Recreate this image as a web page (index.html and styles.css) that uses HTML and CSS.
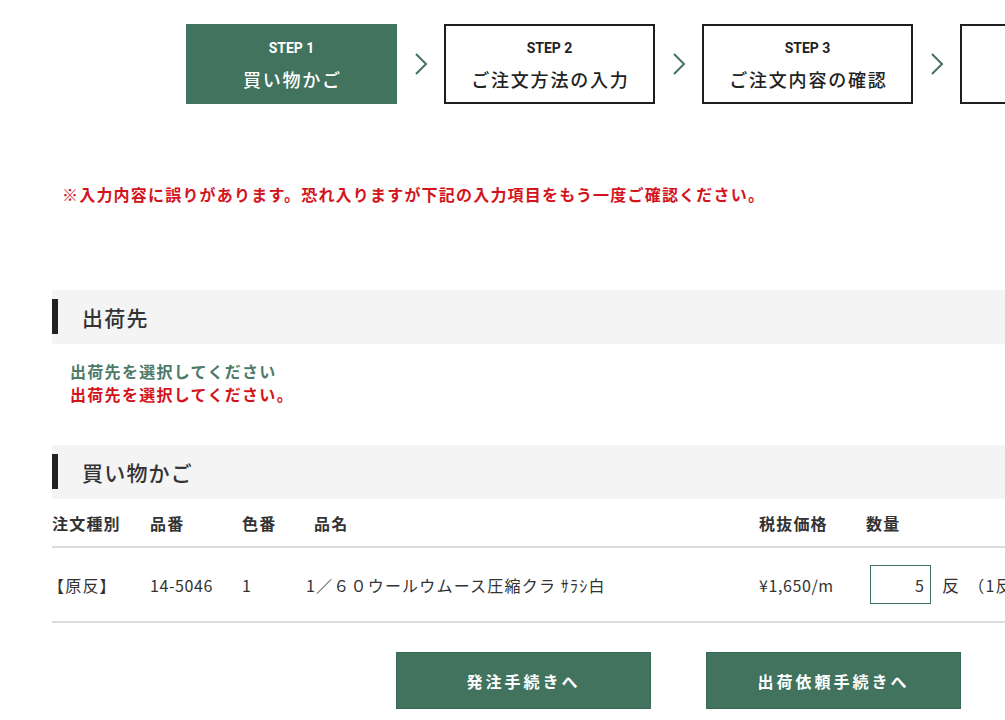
FILE: index.html
```html
<!DOCTYPE html>
<html lang="ja">
<head>
<meta charset="utf-8">
<title>買い物かご</title>
<link rel="stylesheet" href="styles.css">
</head>
<body>
<div class="page">
  <div class="container">
    <ol class="steps">
      <li class="step is-current"><span class="step-no">STEP 1</span><span class="step-name">買い物かご</span></li>
      <li class="arrow"><svg width="14" height="24" viewBox="0 0 14 24"><polyline points="2,2 12,12 2,22" fill="none" stroke="#41735f" stroke-width="2"/></svg></li>
      <li class="step"><span class="step-no">STEP 2</span><span class="step-name">ご注文方法の入力</span></li>
      <li class="arrow"><svg width="14" height="24" viewBox="0 0 14 24"><polyline points="2,2 12,12 2,22" fill="none" stroke="#41735f" stroke-width="2"/></svg></li>
      <li class="step"><span class="step-no">STEP 3</span><span class="step-name">ご注文内容の確認</span></li>
      <li class="arrow"><svg width="14" height="24" viewBox="0 0 14 24"><polyline points="2,2 12,12 2,22" fill="none" stroke="#41735f" stroke-width="2"/></svg></li>
      <li class="step"><span class="step-no">STEP 4</span><span class="step-name">完了</span></li>
    </ol>

    <p class="error-main">※入力内容に誤りがあります。恐れ入りますが下記の入力項目をもう一度ご確認ください。</p>

    <section class="section">
      <h2 class="section-title">出荷先</h2>
      <div class="ship-body">
        <p class="ship-note">出荷先を選択してください</p>
        <p class="ship-error">出荷先を選択してください。</p>
      </div>
    </section>

    <section class="section">
      <h2 class="section-title">買い物かご</h2>
      <div class="cart">
        <div class="cart-row cart-head">
          <div>注文種別</div>
          <div>品番</div>
          <div>色番</div>
          <div class="col-name">品名</div>
          <div>税抜価格</div>
          <div>数量</div>
        </div>
        <div class="cart-row cart-item">
          <div class="col-type">【原反】</div>
          <div class="num">14-5046</div>
          <div class="num">1</div>
          <div>1／６０ウールウムース圧縮クラ ｻﾗｼ白</div>
          <div class="num">¥1,650/m</div>
          <div class="qty"><input class="qty-input" type="text" value="5"><span class="unit">反</span><span class="unit-note">（1反＝約50m）</span></div>
        </div>
      </div>
    </section>

    <div class="actions">
      <button class="btn" type="button">発注手続きへ</button>
      <button class="btn" type="button">出荷依頼手続きへ</button>
    </div>
  </div>
</div>
</body>
</html>
```
FILE: styles.css
```css
html, body {
  margin: 0;
  padding: 0;
  background: #fff;
}
body {
  font-family: "Noto Sans CJK JP", "Noto Sans", sans-serif;
  color: #333;
}
.page {
  width: 1005px;
  height: 720px;
  overflow: hidden;
}
.container {
  width: 1250px;
  margin-left: 52px;
  padding-top: 24px;
}
.steps {
  list-style: none;
  margin: 0;
  padding: 0 0 0 134px;
  display: flex;
  align-items: center;
}
.step {
  box-sizing: border-box;
  width: 211px;
  height: 80px;
  border: 2px solid #1e1e1e;
  display: flex;
  flex-direction: column;
  align-items: center;
  justify-content: center;
  flex-shrink: 0;
}
.step.is-current {
  background: #41735f;
  border-color: #41735f;
  color: #fff;
}
.step-no {
  font-family: "Roboto", "Noto Sans", sans-serif;
  font-weight: 700;
  font-size: 14px;
  line-height: 18px;
  color: #222;
  margin-top: 2px;
}
.step-name {
  font-size: 18px;
  font-weight: 500;
  letter-spacing: 1.8px;
  line-height: 26px;
  margin-top: 9px;
  margin-right: -1.8px;
  color: #222;
}
.is-current .step-no,
.is-current .step-name {
  color: #fff;
}
.arrow {
  width: 47px;
  display: flex;
  justify-content: center;
  flex-shrink: 0;
}
.arrow svg {
  display: block;
}
.error-main {
  margin: 79px 0 0 10px;
  color: #d3141c;
  font-weight: 700;
  font-size: 16px;
  line-height: 22px;
  letter-spacing: 1.2px;
}
.section:first-of-type {
  margin-top: 85px;
}
.section-title {
  margin: 0;
  height: 54px;
  box-sizing: border-box;
  background: #f4f4f4;
  display: flex;
  align-items: center;
  padding-left: 30px;
  position: relative;
  font-size: 21px;
  font-weight: 500;
  letter-spacing: 1.2px;
  color: #333;
}
.section-title::before {
  content: "";
  position: absolute;
  left: 0;
  top: 9px;
  bottom: 10px;
  width: 6px;
  background: #222;
}
.ship-body {
  padding: 16px 0 0 18px;
  height: 101px;
  box-sizing: border-box;
}
.ship-body p {
  margin: 0;
  font-size: 16px;
  font-weight: 700;
  line-height: 23px;
  letter-spacing: 1.3px;
}
.ship-note {
  color: #4e7a6a;
}
.ship-error {
  color: #d3141c;
}
.cart-row {
  display: grid;
  grid-template-columns: 98px 92px 64px 453px 107px 1fr;
  align-items: center;
  font-size: 16px;
  letter-spacing: 1.2px;
}
.cart-head {
  height: 47px;
  font-weight: 700;
  border-bottom: 2px solid #dcdcdc;
  white-space: nowrap;
}
.cart-head .col-name {
  padding-left: 8px;
}
.cart-item {
  height: 73px;
  border-bottom: 2px solid #dcdcdc;
  white-space: nowrap;
}
.cart-item .col-type {
  margin-left: -4px;
}
.cart-item .num {
  letter-spacing: 0.6px;
}
.qty {
  display: flex;
  align-items: center;
}
.qty-input {
  box-sizing: border-box;
  width: 61px;
  height: 39px;
  margin-left: 4px;
  border: 1px solid #41735f;
  text-align: right;
  padding: 0 6px;
  font-family: "Noto Sans CJK JP", "Noto Sans", sans-serif;
  font-size: 16px;
  color: #333;
  outline: none;
}
.unit {
  margin-left: 11px;
  font-size: 17px;
}
.unit-note {
  margin-left: 8px;
  font-size: 16px;
}
.actions {
  display: flex;
  gap: 55px;
  padding-left: 344px;
  margin-top: 29px;
}
.btn {
  width: 255px;
  height: 57px;
  background: #41735f;
  border: 1px solid #3a6a57;
  color: #fff;
  font-family: "Noto Sans CJK JP", "Noto Sans", sans-serif;
  font-size: 16px;
  font-weight: 700;
  letter-spacing: 3px;
  cursor: pointer;
}
```
